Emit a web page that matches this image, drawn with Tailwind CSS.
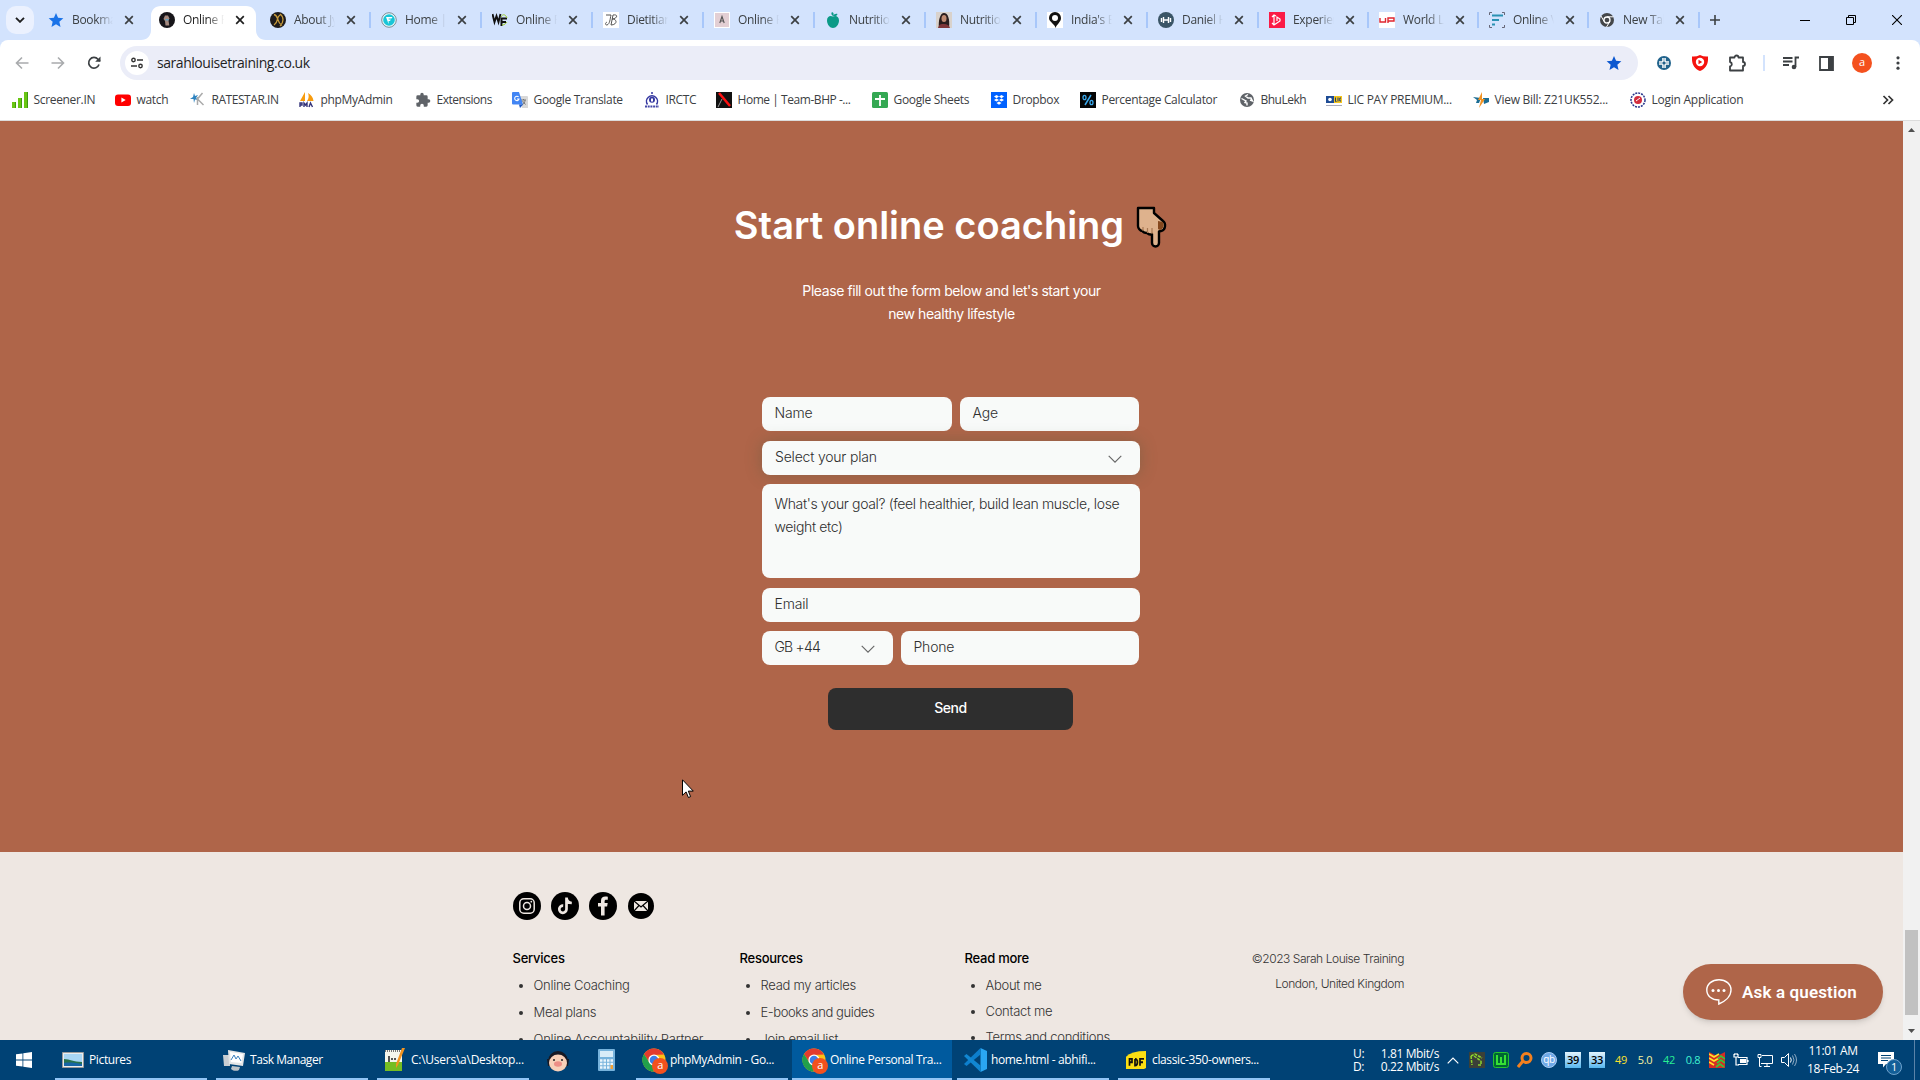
<!DOCTYPE html>
<html lang="en">
<head>
<meta charset="utf-8">
<title>Sarah Louise Training</title>
<script src="https://cdn.jsdelivr.net/npm/@tailwindcss/browser@4"></script>
</head>
<body class="w-[1920px] h-[1080px] overflow-hidden flex flex-col bg-white font-['Open_Sans',sans-serif] text-xs text-[#3c4043]">
<svg class="hidden">
  <symbol id="x" viewBox="0 0 10 10"><path d="M1.2 1.2l7.6 7.6M8.8 1.2l-7.6 7.6" stroke="currentColor" stroke-width="1.7" fill="none"/></symbol>
  <symbol id="star" viewBox="0 0 24 24"><path fill="currentColor" d="M12 1.5l3.1 7.3 7.9.7-6 5.2 1.8 7.8L12 18.4l-6.800 4.100 1.800-7.800-6-5.200 7.900-.7z"/></symbol>
  <symbol id="chrome" viewBox="0 0 24 24"><circle cx="12" cy="12" r="11.500" fill="#fbc116"/><path d="M2 6A11.500 11.500 0 0 1 22 6.500L12 7l-5 7z" fill="#e33b2e"/><path d="M2 6A11.500 11.500 0 0 0 11 23.500l5.500-9.200L7 14z" fill="#22a04b"/><circle cx="12" cy="12" r="5.600" fill="#fff"/><circle cx="12" cy="12" r="4.300" fill="#3b7de9"/></symbol>
  <symbol id="chev" viewBox="0 0 12 7"><path d="M.5.8L6 6.200 11.500.8" fill="none" stroke="currentColor" stroke-width="1"/></symbol>
</svg>

<!-- Tab strip -->
<header class="h-10 shrink-0 bg-[#d3e3fd] flex items-stretch pl-1.5">
  <div class="w-7 h-7 mt-1.5 rounded-[10px] bg-[#ebf1fe] flex items-center justify-center text-[#1f1f1f]"><svg class="w-2.5 h-1.5" viewBox="0 0 10 6"><path d="M1 .8l4 4 4-4" fill="none" stroke="currentColor" stroke-width="1.900"/></svg></div>
  <nav class="ml-0.5 flex text-[12px] tracking-[-0.3px] [&_b]:font-normal [&_b]:w-[41px] [&_b]:shrink-0 [&_b]:overflow-hidden [&_b]:whitespace-nowrap [&_b]:[mask-image:linear-gradient(to_right,#000_60%,transparent)] [&>div]:flex [&>div]:w-[111px] [&>div]:items-center [&>div]:pl-3 [&>div>svg:first-child]:size-4 [&>div>svg]:shrink-0 [&_b]:ml-2 [&>div>svg:nth-of-type(2)]:ml-[11px] [&>div>svg:nth-of-type(2)]:size-2.5">
    <div><svg viewBox="0 0 24 24" class="text-[#1a73e8]"><use href="#star"/></svg><b>Bookmarks</b><svg><use href="#x"/></svg></div>
    <div class="relative text-[#1f1f1f]">
      <svg class="relative z-10" viewBox="0 0 16 16"><circle cx="8" cy="8" r="8" fill="#17151a"/><path d="M6 3.500h3l1.500 3-1 2 .8 5H6.500L6 9 4.500 7z" fill="#a58a80"/><path d="M6.500 7h3v1.500h-3z" fill="#5fa5c8"/></svg><b class="relative z-10">Online Personal</b><svg class="relative z-10"><use href="#x"/></svg>
      <span class="absolute left-[-6px] top-1.5 w-[125px] h-[34px]"><svg viewBox="0 0 125 34" class="w-[125px] h-[34px]"><path d="M0 34c6 0 10-4 10-10V10C10 4 14 0 20 0h85c6 0 10 4 10 10v14c0 6 4 10 10 10z" fill="#fff"/></svg></span>
    </div>
    <div class="relative z-10"><svg viewBox="0 0 16 16"><circle cx="8" cy="8" r="8" fill="#1e1c1c"/><path d="M4 2.500c5 1 2 7 8 11M10 3c-4 2-1 7-6 10M10 2c4 3 4 8 0 12" stroke="#c79b3c" stroke-width="1.300" fill="none"/></svg><b>About Jyoti</b><svg><use href="#x"/></svg></div>
    <div class="relative"><svg viewBox="0 0 16 16"><circle cx="8" cy="8" r="7.300" fill="#e5f7fa" stroke="#7b8f96" stroke-width="1"/><circle cx="8" cy="8" r="5.800" fill="#19c6d8"/><path d="M5 5h6.500l-1 1.600H7.600v1h2.200L9 9.100H7.600V12z" fill="#fff"/></svg><b>Home | Fit</b><svg><use href="#x"/></svg><i class="absolute left-0 top-3 h-4 w-0.5 bg-[#a8c7fa]"></i></div>
    <div class="relative"><svg viewBox="0 0 16 16"><path d="M.5 2l2 8 2-6 2 6 2-8" fill="none" stroke="#111" stroke-width="1.900"/><path d="M9.500 14V6.500H15M9.500 10H14" fill="none" stroke="#111" stroke-width="2"/><path d="M9 5c2-4 5-2 6 1M10 13c3 0 4-2 5-3" stroke="#9ccc2a" fill="none"/></svg><b>Online Pt</b><svg><use href="#x"/></svg><i class="absolute left-0 top-3 h-4 w-0.5 bg-[#a8c7fa]"></i></div>
    <div class="relative"><svg viewBox="0 0 16 16"><path fill="#fff" d="M0 0h16v16H0z"/><path d="M3 3h5c-1 4-1 9-4 10-2 0-2-2 0-3M10 3L8 13M10 3c6-1 4 4-1 4 6 0 5 6-1 6" fill="none" stroke="#555"/></svg><b>Dietitian</b><svg><use href="#x"/></svg><i class="absolute left-0 top-3 h-4 w-0.5 bg-[#a8c7fa]"></i></div>
    <div class="relative"><svg viewBox="0 0 16 16"><path fill="#fff" d="M0 0h16v16H0z"/><path fill="#e3cfd4" d="M1 1h14v14H1z"/><path d="M5.800 11L8 4.500l2.200 6.500M6.500 9h3" fill="none" stroke="#555" stroke-width="1.100"/></svg><b>Online Pt</b><svg><use href="#x"/></svg><i class="absolute left-0 top-3 h-4 w-0.5 bg-[#a8c7fa]"></i></div>
    <div class="relative"><svg viewBox="0 0 16 16"><path d="M8 4.500c3-1.500 6 0 6 4S11 16 8 16s-6-3.500-6-7.500 3-5.500 6-4z" fill="#0b9a87"/><path d="M8 4c-2-1-2-3-1-4 2 1 2 2 1 4zM8 4c1-2 3-2.500 4.500-2C12 4 10 4.500 8 4z" fill="#0b9a87"/></svg><b>Nutrition</b><svg><use href="#x"/></svg><i class="absolute left-0 top-3 h-4 w-0.5 bg-[#a8c7fa]"></i></div>
    <div class="relative"><svg viewBox="0 0 16 16"><path fill="#d9d2cc" d="M0 0h16v16H0z"/><path d="M3 16C2 9 4 1 8 1s6 6 5 15z" fill="#2a1d1d"/><ellipse cx="8" cy="6.500" rx="2.500" ry="3.500" fill="#c08b72"/><path d="M2 16c1-4 3-4 6-4s5 1 6 4z" fill="#7d3538"/></svg><b>Nutrition</b><svg><use href="#x"/></svg><i class="absolute left-0 top-3 h-4 w-0.5 bg-[#a8c7fa]"></i></div>
    <div class="relative"><svg viewBox="0 0 16 16"><path fill="#fff" d="M0 0h16v16H0z"/><path d="M8 0a6 6 0 0 1 6 6c0 4-4 6-5.500 10C8 12 2 10 2 6a6 6 0 0 1 6-6z" fill="#111"/><circle cx="8" cy="6" r="3" fill="#fff"/></svg><b>India's Best</b><svg><use href="#x"/></svg><i class="absolute left-0 top-3 h-4 w-0.5 bg-[#a8c7fa]"></i></div>
    <div class="relative"><svg viewBox="0 0 16 16"><circle cx="8" cy="8" r="8" fill="#3a5566"/><path d="M3.500 6v4M5.500 5v6M10.500 5v6M12.500 6v4M5 8h6" stroke="#fff" stroke-width="1.400"/></svg><b>Daniel Hy</b><svg><use href="#x"/></svg><i class="absolute left-0 top-3 h-4 w-0.5 bg-[#a8c7fa]"></i></div>
    <div class="relative !w-[110px]"><svg viewBox="0 0 16 16"><path fill="#fb1b46" d="M0 0h16v16H0z"/><path d="M5 3v10M3 5l2-2 2 1M3 11l2 2 6-4V7L8 5v4" fill="none" stroke="#fff" stroke-width="1.200"/></svg><b>Experience</b><svg><use href="#x"/></svg><i class="absolute left-0 top-3 h-4 w-0.5 bg-[#a8c7fa]"></i></div>
    <div class="relative !w-[110px]"><svg viewBox="0 0 16 16"><path fill="#fff" d="M0 0h16v16H0z"/><path d="M1 6v4h5.500V6M9 11V6h6v3H9" fill="none" stroke="#e0262f" stroke-width="1.400"/></svg><b>World Lea</b><svg><use href="#x"/></svg><i class="absolute left-0 top-3 h-4 w-0.5 bg-[#a8c7fa]"></i></div>
    <div class="relative !w-[110px]"><svg viewBox="0 0 16 16"><path d="M3 .5H.5V3M13 .5h2.500V3M.5 13v2.500H3M15.500 13v2.500H13" fill="none" stroke="#667"/><path d="M3 3.500h11M3 8h7M3 12.500h3" stroke="#2a92b3" stroke-width="2"/></svg><b>Online Vi</b><svg><use href="#x"/></svg><i class="absolute left-0 top-3 h-4 w-0.5 bg-[#a8c7fa]"></i></div>
    <div class="relative"><svg viewBox="0 0 16 16"><circle cx="8" cy="8" r="7" fill="#44474a"/><circle cx="8" cy="8" r="3" fill="#44474a" stroke="#fff" stroke-width="1.300"/><path d="M8 4.800h6.500M5.200 9.600L2 4M10.800 9.600L7.500 15" stroke="#fff" stroke-width="1"/></svg><b>New Tab</b><svg><use href="#x"/></svg><i class="absolute left-0 top-3 h-4 w-0.5 bg-[#a8c7fa]"></i></div>
  </nav>
  <div class="flex flex-1 items-center text-[#1f1f1f]"><i class="h-4 w-0.5 bg-[#a8c7fa]"></i>
    <svg class="ml-2.5 size-2.5" viewBox="0 0 10 10"><path d="M5 0v10M0 5h10" stroke="#3c4043" stroke-width="1.600"/></svg>
    <svg class="ml-auto w-2.5 h-2.5" viewBox="0 0 10 10"><path d="M0 5.500h10" stroke="#000"/></svg>
    <svg class="ml-9 w-2.5 h-2.5" viewBox="0 0 10 10"><path d="M.5 2.500h7v7h-7zM2.500 2.500v-2h7v7h-2" fill="none" stroke="#000"/></svg>
    <svg class="ml-9 mr-[18px] w-2.5 h-2.5" viewBox="0 0 10 10"><path d="M0 0l10 10M10 0L0 10" stroke="#000" stroke-width="1.100"/></svg>
  </div>
</header>

<!-- Toolbar -->
<div class="h-[46px] shrink-0 bg-[#d3e3fd]"><div class="h-full bg-white rounded-t-lg flex items-center text-[#3c4043]">
  <svg class="ml-[15px] size-3.5 text-[#a9abad]" viewBox="0 0 14 14"><path d="M13.500 7H1.500M7 1.500L1.500 7 7 12.500" fill="none" stroke="currentColor" stroke-width="1.600"/></svg>
  <svg class="ml-[22px] size-3.5 text-[#a9abad]" viewBox="0 0 14 14"><path d="M.5 7h12M7 1.500L12.500 7 7 12.500" fill="none" stroke="currentColor" stroke-width="1.600"/></svg>
  <svg class="ml-[22px] size-3.5" viewBox="0 0 14 14"><path d="M12 8.500A5.300 5.300 0 1 1 11 3.300L13 5" fill="none" stroke="currentColor" stroke-width="1.700"/><path d="M13.500.5v5.300H8.200z" fill="currentColor"/></svg>
  <div class="ml-[19px] w-[1518px] h-[34px] rounded-full bg-[#ebedf8] flex items-center pl-[5px]">
    <span class="size-6 rounded-full bg-white flex items-center justify-center"><svg class="size-3" viewBox="0 0 12 12"><path d="M6 3h6M0 9h6" stroke="#333" stroke-width="1.600"/><circle cx="2.500" cy="3" r="1.700" fill="none" stroke="#333" stroke-width="1.400"/><circle cx="9.500" cy="9" r="1.700" fill="none" stroke="#333" stroke-width="1.400"/></svg></span>
    <span class="ml-2 text-sm tracking-[-0.45px] text-[#1f1f1f]">sarahlouisetraining.co.uk</span>
    <svg class="ml-auto mr-4 size-4 text-[#0b57d0]"><use href="#star"/></svg>
  </div>
  <svg class="ml-[19px] size-3.5" viewBox="0 0 14 14"><circle cx="7" cy="7" r="7" fill="#21638c"/><path d="M7 2v10M2 7h10" stroke="#fff" stroke-width="3.600"/><circle cx="7" cy="7" r="1.500" fill="#21638c"/><path d="M7 2v10M2 7h10" stroke="#21638c" stroke-width=".6"/></svg>
  <svg class="ml-[21px] size-4" viewBox="0 0 16 16"><path d="M0 1.500Q4 2 8 0q4 2 8 1.500C16.500 9 14 13.500 8 16 2 13.500-.5 9 0 1.500z" fill="#f5130f"/><circle cx="8" cy="7" r="4.200" fill="#fff"/><path d="M6.500 4.800v4.400L10.200 7z" fill="#f5130f"/></svg>
  <svg class="ml-5 size-[18px]" viewBox="0 0 18 18"><path d="M2 3.500h4.500a2 2 0 0 1 4 0H15V8a2 2 0 0 1 0 4v4.500H2V12.500a2.300 2.300 0 0 0 0-4.500z" fill="none" stroke="currentColor" stroke-width="1.800" stroke-linejoin="round"/></svg>
  <i class="ml-[17px] h-4 w-0.5 bg-[#d3e3fd]"></i>
  <svg class="ml-[18px] w-4 h-[14px]" viewBox="0 0 16 14"><path d="M0 2h9.500M0 5.500h9.500M0 9h6M12.500 11V1.500H16" fill="none" stroke="currentColor" stroke-width="1.800"/><circle cx="11" cy="11" r="2.300" fill="currentColor"/></svg>
  <svg class="ml-5 w-[15px] h-[15px]" viewBox="0 0 15 15"><path d="M1 1h13v13H1z" fill="none" stroke="currentColor" stroke-width="1.800"/><path d="M9 1h5v13H9z" fill="currentColor"/></svg>
  <span class="ml-[18px] size-5 rounded-full bg-[#f4511e] text-white text-[11px] flex items-center justify-center pb-px">a</span>
  <svg class="ml-6 w-1 h-3.5" viewBox="0 0 4 14"><circle cx="2" cy="1.800" r="1.600" fill="currentColor"/><circle cx="2" cy="7" r="1.600" fill="currentColor"/><circle cx="2" cy="12.200" r="1.600" fill="currentColor"/></svg>
</div></div>

<!-- Bookmarks bar -->
<div class="h-[35px] shrink-0 border-b border-[#dcdcdc] pb-1.5 flex items-center pl-3 tracking-[-0.33px] whitespace-nowrap [&>div]:flex [&>div]:shrink-0 [&>div]:items-center [&>div]:gap-[5.500px] [&_svg]:size-4 [&_svg]:shrink-0">
  <div class="w-[103px]"><svg viewBox="0 0 16 16"><path d="M0 10h4v6H0zM6 6h4v10H6zM12 0h4v16h-4z" fill="#6ac613"/><path d="M3 10h1v6H3zM9 6h1v10H9zM15 0h1v16h-1z" fill="#3f9a10"/></svg>Screener.IN</div>
  <div class="w-[75px]"><svg viewBox="0 0 16 16"><rect y="2.500" width="16" height="11.500" rx="3" fill="#f00"/><path d="M6.400 5.500v5l4.300-2.500z" fill="#fff"/></svg>watch</div>
  <div class="w-[109px] tracking-[-0.45px]"><svg viewBox="0 0 16 16"><path d="M4 1l1 3 3-1-2 3 3 2-4-.5L4 11 3.500 7 0 7l3-2z" fill="#2d83c0"/><path d="M12.500 1L7.500 7l6 6M7.500 5v8" fill="none" stroke="#aaa" stroke-width="1.500"/></svg>RATESTAR.IN</div>
  <div class="w-[116px]"><svg viewBox="0 0 16 16"><path d="M6 0l-5 9h5zM9 1c3 2 5 4 5.500 8H8c2-3 2-5 1-8z" fill="#f89c0e"/><path d="M1 15v-4h2v2H1M5 15v-4l1.500 2L8 11v4M10 15l1.500-4 2 4" fill="none" stroke="#34347a" stroke-width="1.400"/></svg>phpMyAdmin</div>
  <div class="w-[97px] tracking-[-0.5px]"><svg viewBox="0 0 24 24"><path fill="#5f6368" d="M20.500 11H19V7a2 2 0 0 0-2-2h-4V3.500a2.500 2.500 0 0 0-5 0V5H4a2 2 0 0 0-2 2v3.800h1.500a2.700 2.700 0 0 1 0 5.400H2V20a2 2 0 0 0 2 2h3.800v-1.500a2.700 2.700 0 0 1 5.400 0V22H17a2 2 0 0 0 2-2v-4h1.500a2.500 2.500 0 0 0 0-5z"/></svg>Extensions</div>
  <div class="w-[132px]"><svg viewBox="0 0 16 16"><path d="M6 4h9a1 1 0 0 1 1 1v11h-6z" fill="#d8d8d8"/><path d="M9 8h5M11.500 7v1M10 13c2-1 3-3 3-5M10.500 9l3 3.500" stroke="#777" fill="none"/><path d="M1 0h6l4 12.500H1a1 1 0 0 1-1-1V1a1 1 0 0 1 1-1z" fill="#4285f4"/><path d="M11 12.500L8 16l-1-3.500z" fill="#1a56c4"/><path d="M6.600 5A2.200 2.200 0 1 0 7 7H5" fill="none" stroke="#fff" stroke-width="1.100"/></svg>Google Translate</div>
  <div class="w-[72px]"><svg viewBox="0 0 16 16"><path d="M3.500 12.500a5.500 5.500 0 1 1 9 0M8 0v2" fill="none" stroke="#3336a0" stroke-width="1.500"/><circle cx="8" cy="7.800" r="3" fill="#3336a0"/><path d="M7 6.500h2v3H7z" fill="#fff"/><path d="M1 14.500h14" stroke="#4448a8" stroke-width="2" stroke-dasharray="2 .7"/></svg>IRCTC</div>
  <div class="w-[156px] tracking-[-0.45px]"><svg viewBox="0 0 16 16"><path d="M0 0h16v16H0z" fill="#111"/><path d="M3 1l11 13" stroke="#f11" stroke-width="2.500"/><path d="M6 7L2 15" stroke="#999"/></svg>Home | Team-BHP -...</div>
  <div class="w-[119px]"><svg viewBox="0 0 16 16"><rect width="16" height="16" rx="1.500" fill="#34a853"/><path d="M8 3v11M3 7h10" stroke="#fff" stroke-width="1.800"/></svg>Google Sheets</div>
  <div class="w-[89px]"><svg viewBox="0 0 16 16"><path d="M0 0h16v16H0z" fill="#0061ff"/><path d="M5.500 3l2.500 1.600-2.500 1.600L3 4.600zM10.500 3L13 4.600l-2.500 1.600L8 4.600zM5.500 6.400L8 8l-2.500 1.600L3 8zM10.500 6.400L13 8l-2.500 1.600L8 8zM8 9.500l2.500 1.600L8 12.700l-2.500-1.600z" fill="#fff"/></svg>Dropbox</div>
  <div class="w-[159px]"><svg viewBox="0 0 16 16"><path d="M0 0h16v16H0z" fill="#050505"/><path d="M11 3L5 13" stroke="#3ba9ec" stroke-width="1.500"/><ellipse cx="4.500" cy="5.500" rx="1.500" ry="2.200" fill="none" stroke="#3ba9ec" stroke-width="1.300"/><ellipse cx="11.500" cy="10.500" rx="1.500" ry="2.200" fill="none" stroke="#3ba9ec" stroke-width="1.300"/></svg>Percentage Calculator</div>
  <div class="w-[87px] tracking-[-0.5px]"><svg viewBox="0 0 16 16"><circle cx="8" cy="8" r="7" fill="#5f6368"/><path d="M2.500 6.500L7 9l-1 1.500 2 .5v2.500M9 2.500L6.500 4 9 6h3l1.500 3L11 8" fill="none" stroke="#fff" stroke-width="1.400"/></svg>BhuLekh</div>
  <div class="w-[147px] tracking-[-0.28px]"><svg viewBox="0 0 16 16"><path d="M0 4h8v7H0z" fill="#1d4b94"/><path d="M8 4h8v7H8z" fill="#f6c61b"/><circle cx="4" cy="7.500" r="1.800" fill="#fff"/><path d="M9.500 5.500v4h1M12 5.500v4M15 6h-1.200v3H15" stroke="#1d3b74" fill="none"/><path d="M0 13.500h16" stroke="#aab"/></svg>LIC PAY PREMIUM...</div>
  <div class="w-[157px] tracking-[-0.26px]"><svg viewBox="0 0 16 16"><path d="M0 5l8 1-2 5H3l1-3zM10 6h6v4l-5 2z" fill="#1b6d94"/><path d="M9 0L5 8h3L6 16l6-9H9z" fill="#f39322"/></svg>View Bill: Z21UK552...</div>
  <div class="tracking-[-0.25px]"><svg viewBox="0 0 16 16"><circle cx="8" cy="8" r="7" fill="#fff" stroke="#27348b" stroke-width="1.500" stroke-dasharray="2 1"/><circle cx="8" cy="8" r="4" fill="#d22d3d"/><path d="M6 9l4-3" stroke="#fff"/></svg>Login Application</div>
  <svg class="ml-auto mr-[26px] !w-3 !h-3" viewBox="0 0 12 12"><path d="M1.500 2l4 4-4 4M6.500 2l4 4-4 4" fill="none" stroke="#333" stroke-width="1.700"/></svg>
</div>

<!-- Page viewport -->
<div class="h-[919px] shrink-0 flex overflow-hidden font-[Inter,sans-serif]">
  <main class="w-[1903px] relative">
    <section class="h-[731px] bg-[#af6549] flex flex-col items-center text-white">
      <h1 class="mt-20 h-12 flex items-center pr-0.5 text-[38px] font-semibold whitespace-nowrap">Start online coaching
        <svg class="ml-3 mt-1 w-[31px] h-[42px]" viewBox="0 0 31 42"><path d="M2 2h16v5l9 8c3 2 3 9-2 10l-2 .5V37a3.500 3.500 0 0 1-7 0v-9c-2 1-4 0-5-1-2 0-4-1-4.500-2C4 25 2 22 2 20z" fill="#deb28d" stroke="#000" stroke-width="2.400" stroke-linejoin="round"/><path d="M22 15l5 1c1 3 1 7-3 8l-2-1z" fill="#85481e"/><path d="M7 25v-4M11.500 27v-5M16 28v-6" stroke="#a87953" stroke-width="1.200"/></svg></h1>
      <p class="mt-[30px] text-center text-[14px] leading-[23px] tracking-[-0.42px] whitespace-nowrap">Please fill out the form below and let's start your<br>new healthy lifestyle</p>
      <form class="mt-[72px] w-[378px] mr-px flex flex-col text-[14px] tracking-[-0.2px] font-light text-[#2e2e2e] [&_div]:bg-[#f8faf9] [&_div]:rounded-lg [&_div]:flex [&_div]:items-center [&_div]:h-[34px] [&_div]:px-[12.500px] [&_div]:pb-px">
        <section class="flex gap-2"><div class="w-[190px]">Name</div><div class="w-[179px]">Age</div></section>
        <div class="mt-2.5 !pl-[13px] justify-between shadow-[0_0_16px_rgba(70,90,60,0.35)]">Select your plan<svg class="mr-1.5 mt-0.5 w-3.5 h-2 text-[#666]"><use href="#chev"/></svg></div>
        <div class="mt-[9px] !h-[94px] !items-start pt-2 leading-[23px] tracking-[-0.36px] whitespace-nowrap">What's your goal? (feel healthier, build lean muscle, lose<br>weight etc)</div>
        <div class="mt-2.5">Email</div>
        <section class="mt-[9px] flex gap-2"><div class="w-[131px] justify-between"><span class="tracking-[-0.8px]">GB +44</span><svg class="mr-1.5 mt-0.5 w-3.5 h-2 text-[#666]"><use href="#chev"/></svg></div><div class="w-[238px]">Phone</div></section>
        <button class="mt-[23px] ml-[66px] w-[245px] h-[42px] rounded-lg bg-[#2e2e2e] text-white font-medium tracking-[-0.4px] pb-px">Send</button>
      </form>
    </section>
    <footer class="h-[188px] bg-[#eee7e2] pl-[512.500px] pt-10 text-[#333]">
      <div class="flex items-center gap-2.5 h-7">
        <svg class="size-7" viewBox="0 0 28 28"><circle cx="14" cy="14" r="14"/><rect x="6.800" y="6.800" width="14.400" height="14.400" rx="4" fill="none" stroke="#eee7e2" stroke-width="1.500"/><circle cx="14" cy="14" r="3.500" fill="none" stroke="#eee7e2" stroke-width="1.500"/><circle cx="18.300" cy="9.700" r=".9" fill="#eee7e2"/></svg>
        <svg class="size-7" viewBox="0 0 28 28"><circle cx="14" cy="14" r="14"/><path d="M15.500 5.500v11.800a3.600 3.600 0 1 1-3.300-3.700M15.500 6c.3 3 2.200 4.800 5.300 5" fill="none" stroke="#eee7e2" stroke-width="2.700"/></svg>
        <svg class="size-7" viewBox="0 0 28 28"><circle cx="14" cy="14" r="14"/><path d="M12 23.500v-9H9V11h3V8.700c0-3 1.800-4.200 4.300-4.200.9 0 2 .1 2.500.2v3h-1.500c-1.300 0-1.700.7-1.700 1.600V11h3.100l-.6 3.500h-2.500v9z" fill="#eee7e2"/></svg>
        <svg class="size-[26px] ml-px" viewBox="0 0 26 26"><circle cx="13" cy="13" r="13"/><path d="M6 8h14v10H6z" fill="#eee7e2"/><path d="M6 8l7 6 7-6M6 18l5-5.500M20 18l-5-5.500" fill="none" stroke="#000" stroke-width="1.200"/></svg>
      </div>
      <div class="mt-[24.500px] flex text-[13px] leading-[27px] tracking-[-0.28px] font-light [&_h2]:font-medium [&_h2]:text-[13px] [&_h2]:tracking-[-0.25px] [&_h2]:text-black [&_ul]:list-disc [&_ul]:pl-[21px] [&_li]:whitespace-nowrap">
        <div class="w-[227px]"><h2>Services</h2><ul><li>Online Coaching</li><li>Meal plans</li><li class="tracking-[-0.2px]">Online Accountability Partner</li></ul></div>
        <div class="w-[225px]"><h2>Resources</h2><ul><li>Read my articles</li><li class="tracking-[-0.4px]">E-books and guides</li><li>Join email list</li></ul></div>
        <div class="w-[226px]"><h2>Read more</h2><ul class="leading-[26px]"><li>About me</li><li>Contact me</li><li>Terms and conditions</li></ul></div>
        <p class="w-[213.500px] text-right text-[12px] leading-[25px] pt-px tracking-[-0.45px]">©2023 Sarah Louise Training<br>London, United Kingdom</p>
      </div>
    </footer>
    <button class="absolute left-[1683px] top-[843px] w-[200px] h-14 rounded-full bg-[#af6549] shadow-md flex items-center pl-[23px] text-white font-[Roboto,sans-serif] font-semibold text-[17px] tracking-[0.15px]">
      <svg class="size-[26px] mr-2.5" viewBox="0 0 26 26"><path d="M13 .8C6 .8.800 5 .8 11s5 10 12 10v4c6-2.500 12.200-7.500 12.200-14C25 5 20 .8 13 .8z" fill="none" stroke="#fff" stroke-width="1.400"/><circle cx="7" cy="11.500" r="1.500" fill="#fff"/><circle cx="12.500" cy="11.500" r="1.500" fill="#fff"/><circle cx="18" cy="11.500" r="1.500" fill="#fff"/></svg>Ask a question</button>
    <svg class="absolute left-[682px] top-[658px] w-3 h-[20px]" viewBox="0 0 12 20"><path d="M.5.8v15.500l3.600-3.400 2.300 5.600 2.200-.9-2.300-5.500h5z" fill="#fff" stroke="#000"/></svg>
  </main>
  <aside class="w-[17px] bg-[#f1f1f1] flex flex-col items-center">
    <svg class="mt-[7px] w-[7px] h-1" viewBox="0 0 7 4"><path d="M0 4L3.500 0 7 4z" fill="#505050"/></svg>
    <i class="mt-[798px] w-[13px] h-[85px] bg-[#c1c1c1]"></i>
    <svg class="mt-3.5 w-[7px] h-1" viewBox="0 0 7 4"><path d="M0 0l3.500 4L7 0z" fill="#505050"/></svg>
  </aside>
</div>

<!-- Taskbar -->
<div class="h-10 shrink-0 bg-[#004275] flex text-white tracking-[-0.37px] whitespace-nowrap [&>a]:flex [&>a]:items-center [&>a]:w-[152px] [&>a]:pt-0.5 [&>a]:border-b-2 [&>a]:border-[#92c5f5] [&>a]:mr-[9px] [&>a]:shrink-0">
  <svg class="ml-4 mt-3 size-4 mr-[23px] shrink-0" viewBox="0 0 16 16"><path d="M0 2.300L6.500 1.400v6.200H0zM7.300 1.300L16 0v7.600H7.300zM0 8.400h6.500v6.200L0 13.700zM7.300 8.400H16V16l-8.700-1.300z" fill="#fff"/></svg>
  <a class="pl-[7px]"><svg class="w-[22px] h-4 mr-[5px]" viewBox="0 0 22 16"><path d="M.5.5h21v15H.5z" fill="#e8edf0" stroke="#999"/><path d="M2 2h18v12H2z" fill="#a7d5f4"/><path d="M2 7c6 0 9 3 18 3v4H2z" fill="#27734f"/><path d="M2 11c6-1 12 0 18 1v2H2z" fill="#1665a5"/></svg>Pictures</a>
  <a class="pl-[7px]"><svg class="w-[22px] h-[22px] mr-[5px]" viewBox="0 0 22 22"><path d="M0 6h7v11H1z" fill="#c9ced2"/><path d="M5 1l17 3-2 13-14-2z" fill="#e3e5e6"/><path d="M7 3l13 2-1.500 9L8 13z" fill="#fff"/><path d="M8 11l3-5 2 4 2-3 3 5" fill="none" stroke="#3b80bd"/><path d="M9 17l8 1-1 3c-2 1.500-6 1-8-1z" fill="#bcc3c8"/></svg><span class="tracking-[-0.45px]">Task Manager</span></a>
  <a class="pl-[7px]"><svg class="w-[22px] h-6 mr-[5px]" viewBox="0 0 22 24"><path d="M1 2h17v21H1z" fill="#f5f6ec"/><path d="M1 14h17v9H1z" fill="#76bd22"/><path d="M1 3h17" stroke="#777" stroke-width="2" stroke-dasharray="1 1"/><path d="M5 8v6M8 10v2M11 10v2" stroke="#222" stroke-width="1.500"/><path d="M21 0l-7 17-2 3v-4L18 0z" fill="#f29420"/></svg><span class="tracking-[-0.25px]">C:\Users\a\Desktop...</span></a>
  <svg class="ml-2 mt-[9px] size-6 shrink-0" viewBox="0 0 24 24"><circle cx="12" cy="12" r="10" fill="#171923"/><path d="M1 10h4v7H2zM19 10h4l-1 7h-3z" fill="#171923"/><ellipse cx="12" cy="14" rx="9" ry="8.500" fill="#f8d0b8"/><ellipse cx="12" cy="15" rx="4" ry="2.800" fill="#ed8e86"/><circle cx="8" cy="11" r="1" fill="#222"/><circle cx="16" cy="11" r="1" fill="#222"/></svg>
  <svg class="ml-7 mt-[9px] w-[17px] h-[22px] shrink-0 mr-[21px]" viewBox="0 0 17 22"><rect width="17" height="22" rx="1" fill="#77b3dc"/><path d="M2 2h13v6H2z" fill="#d8ecf8"/><path d="M2 11.500h13M2 15h13M2 18.500h13" stroke="#eaf5fc" stroke-width="2.500" stroke-dasharray="2.500 1"/><path d="M12.500 16h2.500v4h-2.500z" fill="#f1a136"/></svg>
  <a class="pl-1.5 !mr-1"><span class="relative w-7 h-6"><svg class="size-6"><use href="#chrome"/></svg><i class="absolute left-2.5 top-2.5 size-4 rounded-full bg-[#f4511e] text-[11px] leading-[14px] text-center not-italic">a</i></span>phpMyAdmin - Go...</a>
  <a class="!w-40 pl-[10px] bg-[#005a9e] !mr-[5px]"><span class="relative w-7 h-6"><svg class="size-6"><use href="#chrome"/></svg><i class="absolute left-2.5 top-2.5 size-4 rounded-full bg-[#f4511e] text-[11px] leading-[14px] text-center not-italic">a</i></span>Online Personal Tra...</a>
  <a class="pl-1.5"><svg class="size-6 mr-1" viewBox="0 0 24 24"><path d="M17.500 0L24 3v18l-6.500 3z" fill="#2aa6f2"/><path d="M17.500 0v6.500L3.500 18 1 16z" fill="#0d7fcd"/><path d="M17.500 24v-6.500L3.500 6 1 8z" fill="#1187d2"/></svg>home.html - abhifi...</a>
  <a class="pl-2"><svg class="w-5 h-[18px] mr-1.5" viewBox="0 0 20 16" preserveAspectRatio="none"><path d="M0 5Q5 0 20 0v15l-2 1H0z" fill="#fbdf13"/><path d="M3.500 13V7H6v3H3.500M9 7v6c3 0 3.500-6 0-6M14 13V7h4M14 10h3" fill="none" stroke="#111" stroke-width="1.700"/></svg>classic-350-owners...</a>
  <div class="ml-[74px] w-[86px] mt-[7px] leading-[13px] shrink-0"><p class="flex justify-between"><span>U:</span><span>1.81 Mbit/s</span></p><p class="flex justify-between"><span>D:</span><span>0.22 Mbit/s</span></p></div>
  <div class="ml-2 flex items-center shrink-0 [&_svg]:size-4 [&_svg]:shrink-0 gap-2">
    <svg class="!w-3 !h-[7px] mr-0.5" viewBox="0 0 12 7"><path d="M.7 6.300L6 1l5.300 5.300" fill="none" stroke="#fff" stroke-width="1.200"/></svg>
    <svg viewBox="0 0 16 16"><path d="M0 0h16v16H0z" fill="#3b4038"/><path d="M2 4l4-2 7 4M2 4l1 9M5 4l7 5M12 9v4H8" fill="none" stroke="#8cd52d" stroke-width="1.500" stroke-dasharray="3 1"/></svg>
    <svg viewBox="0 0 16 16"><rect x=".5" y=".5" width="15" height="15" rx="2" fill="#063" stroke="#25c62a"/><path d="M4 3v9h8V3M8 5v7" fill="none" stroke="#35e134" stroke-width="2"/></svg>
    <svg viewBox="0 0 16 16"><circle cx="9.500" cy="6" r="4.500" fill="none" stroke="#f4801f" stroke-width="3"/><path d="M6 9l-5 6" stroke="#f4801f" stroke-width="3"/></svg>
    <span class="size-4 shrink-0 rounded-full bg-[#6fa9e8] border border-[#a7cdf5] text-[10px] leading-[12px] text-center">qb</span>
    <span class="size-4 shrink-0 bg-linear-to-b from-[#e2f4fd] to-[#54b6ee] text-black font-semibold text-[11px] leading-4 text-center">39</span>
    <span class="size-4 shrink-0 bg-linear-to-b from-[#e2f4fd] to-[#54b6ee] text-black font-semibold text-[11px] leading-4 text-center">33</span>
    <span class="w-4 text-center text-[#fde02c] text-[11px]">49</span>
    <span class="w-4 flex justify-center text-[#f6f3a0] text-[11px]">5.0</span>
    <span class="w-4 text-center text-[#29ef93] text-[11px]">42</span>
    <span class="w-4 flex justify-center text-[#40f4d0] text-[11px]">0.8</span>
    <svg viewBox="0 0 16 16"><path d="M0 0l8 4 8-4v16H0z" fill="#d62b25"/><path d="M0 2l5 3 5-3M0 6l5 3 5-3M0 10l5 3" fill="none" stroke="#ffe22b" stroke-width="1.700"/><path d="M7 15l4-3 4 3M8 11l4-3 4 3M9 7l3-3 4 3" fill="none" stroke="#35c73a" stroke-width="1.700"/></svg>
    <svg viewBox="0 0 16 16"><path d="M5 5.500h9v7H5M15 8v2" fill="none" stroke="#fff" stroke-width="1.200"/><path d="M7 7h6v4H7z" fill="#fff"/><path d="M1 2v3h4V2M3 5v8h3M2 1v2M4 1v2" fill="none" stroke="#fff" stroke-width="1.200"/></svg>
    <svg viewBox="0 0 16 16"><path d="M5 3.500h10.500v8H4M7 14.500h6M10 11.500v3M1 2.500h3v3H1zM2.500 5.500v9h2" fill="none" stroke="#fff"/></svg>
    <svg viewBox="0 0 16 16"><path d="M.5 5.500h3l4-4v13l-4-4h-3z" fill="none" stroke="#fff"/><path d="M9.500 5.500q1.500 2.500 0 5" fill="none" stroke="#fff"/><path d="M11.500 3.500q3 4.500 0 9M13.500 2q4 6 0 12" fill="none" stroke="#8da9c2"/></svg>
  </div>
  <div class="w-[72px] mt-0.5 leading-[18px] text-center shrink-0">11:01 AM<br>18-Feb-24</div>
  <div class="relative w-8 ml-[9px] shrink-0"><svg class="mt-3 w-4 h-4" viewBox="0 0 16 16"><path d="M0 0h16v12H8l-3 3.500V12H0z" fill="#fff"/><path d="M3 3.500h10M3 6h10M3 8.500h7" stroke="#004275"/></svg><i class="absolute left-2 top-[19px] size-4 rounded-full bg-[#135f98] border border-[#6fa2cc] not-italic text-[11px] leading-[14px] text-center">1</i></div>
  <i class="w-px bg-[#5a83a8] ml-1"></i>
</div>
</body>
</html>
